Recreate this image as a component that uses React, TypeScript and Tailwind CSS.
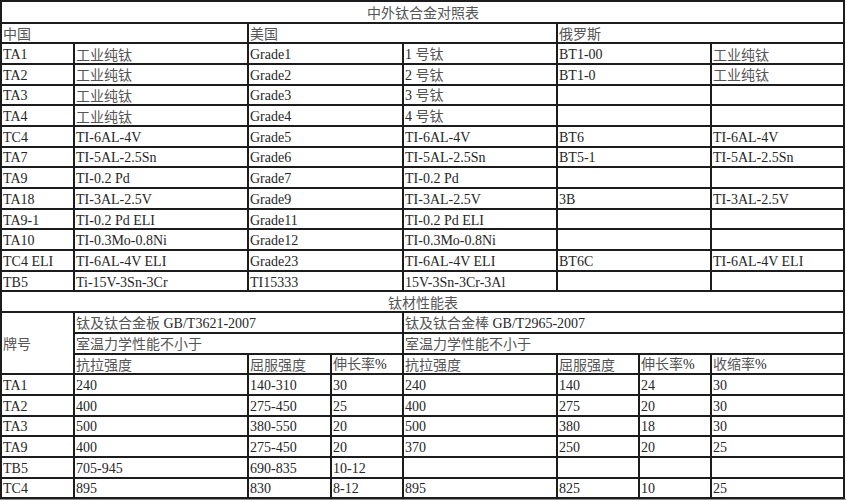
const CJK = /[\u3000-\u9fff\uff00-\uffef]/

// split text into CJK / latin runs so each gets its own font
function T({ s }: { s: string }) {
  const runs: { cjk: boolean; text: string }[] = []
  for (const ch of s) {
    const isCjk = CJK.test(ch)
    const last = runs[runs.length - 1]
    if (last && last.cjk === isCjk) last.text += ch
    else runs.push({ cjk: isCjk, text: ch })
  }
  return (
    <>
      {runs.map((r, i) =>
        r.cjk ? (
          <span key={i} className="font-['Noto_Sans_CJK_SC',sans-serif] text-[14px] text-[#555]">
            {r.text}
          </span>
        ) : (
          <span key={i} className="font-['Liberation_Serif',serif] text-[14px] text-[#262626] whitespace-pre">
            {r.text}
          </span>
        )
      )}
    </>
  )
}

const cell = "border-2 border-[#1c1c1c] p-0 pl-px leading-none align-middle whitespace-nowrap overflow-hidden"

function C({ s = "", span = 1, rows = 1, center = false }: { s?: string; span?: number; rows?: number; center?: boolean }) {
  return (
    <td colSpan={span} rowSpan={rows} className={cell + (center ? " text-center" : " text-left")}>
      <T s={s} />
    </td>
  )
}

const compare = [
  ["TA1", "工业纯钛", "Grade1", "1 号钛", "BT1-00", "工业纯钛"],
  ["TA2", "工业纯钛", "Grade2", "2 号钛", "BT1-0", "工业纯钛"],
  ["TA3", "工业纯钛", "Grade3", "3 号钛", "", ""],
  ["TA4", "工业纯钛", "Grade4", "4 号钛", "", ""],
  ["TC4", "TI-6AL-4V", "Grade5", "TI-6AL-4V", "BT6", "TI-6AL-4V"],
  ["TA7", "TI-5AL-2.5Sn", "Grade6", "TI-5AL-2.5Sn", "BT5-1", "TI-5AL-2.5Sn"],
  ["TA9", "TI-0.2 Pd", "Grade7", "TI-0.2 Pd", "", ""],
  ["TA18", "TI-3AL-2.5V", "Grade9", "TI-3AL-2.5V", "3B", "TI-3AL-2.5V"],
  ["TA9-1", "TI-0.2 Pd ELI", "Grade11", "TI-0.2 Pd ELI", "", ""],
  ["TA10", "TI-0.3Mo-0.8Ni", "Grade12", "TI-0.3Mo-0.8Ni", "", ""],
  ["TC4 ELI", "TI-6AL-4V ELI", "Grade23", "TI-6AL-4V ELI", "BT6C", "TI-6AL-4V ELI"],
  ["TB5", "Ti-15V-3Sn-3Cr", "TI15333", "15V-3Sn-3Cr-3Al", "", ""],
]

const perf = [
  ["TA1", "240", "140-310", "30", "240", "140", "24", "30"],
  ["TA2", "400", "275-450", "25", "400", "275", "20", "30"],
  ["TA3", "500", "380-550", "20", "500", "380", "18", "30"],
  ["TA9", "400", "275-450", "20", "370", "250", "20", "25"],
  ["TB5", "705-945", "690-835", "10-12", "", "", "", ""],
  ["TC4", "895", "830", "8-12", "895", "825", "10", "25"],
]

const widths = [73, 174, 83, 72, 154, 82, 72, 133]

export default function App() {
  return (
    <div className="w-[846px] h-[500px] bg-white overflow-hidden">
      <table className="border-collapse table-fixed w-[843px]">
        <colgroup>
          {widths.map((w, i) => (
            <col key={i} style={{ width: w }} />
          ))}
        </colgroup>
        <tbody>
          <tr className="h-[21.5px]">
            <C s="中外钛合金对照表" span={8} center />
          </tr>
          <tr className="h-[20.7px]">
            <C s="中国" span={2} />
            <C s="美国" span={3} />
            <C s="俄罗斯" span={3} />
          </tr>
          {compare.map((r) => (
            <tr key={r[0]} className="h-[20.7px]">
              <C s={r[0]} />
              <C s={r[1]} />
              <C s={r[2]} span={2} />
              <C s={r[3]} />
              <C s={r[4]} span={2} />
              <C s={r[5]} />
            </tr>
          ))}
          <tr className="h-[20.7px]">
            <C s="钛材性能表" span={8} center />
          </tr>
          <tr className="h-[20.7px]">
            <C s="牌号" rows={3} />
            <C s="钛及钛合金板 GB/T3621-2007" span={3} />
            <C s="钛及钛合金棒 GB/T2965-2007" span={4} />
          </tr>
          <tr className="h-[20.7px]">
            <C s="室温力学性能不小于" span={3} />
            <C s="室温力学性能不小于" span={4} />
          </tr>
          <tr className="h-[20.7px]">
            <C s="抗拉强度" />
            <C s="屈服强度" />
            <C s="伸长率%" />
            <C s="抗拉强度" />
            <C s="屈服强度" />
            <C s="伸长率%" />
            <C s="收缩率%" />
          </tr>
          {perf.map((r) => (
            <tr key={r[0]} className="h-[20.7px]">
              {r.map((v, i) => (
                <C key={i} s={v} />
              ))}
            </tr>
          ))}
        </tbody>
      </table>
      <div className="h-[4px] bg-[#8c8c8c]" />
    </div>
  )
}
